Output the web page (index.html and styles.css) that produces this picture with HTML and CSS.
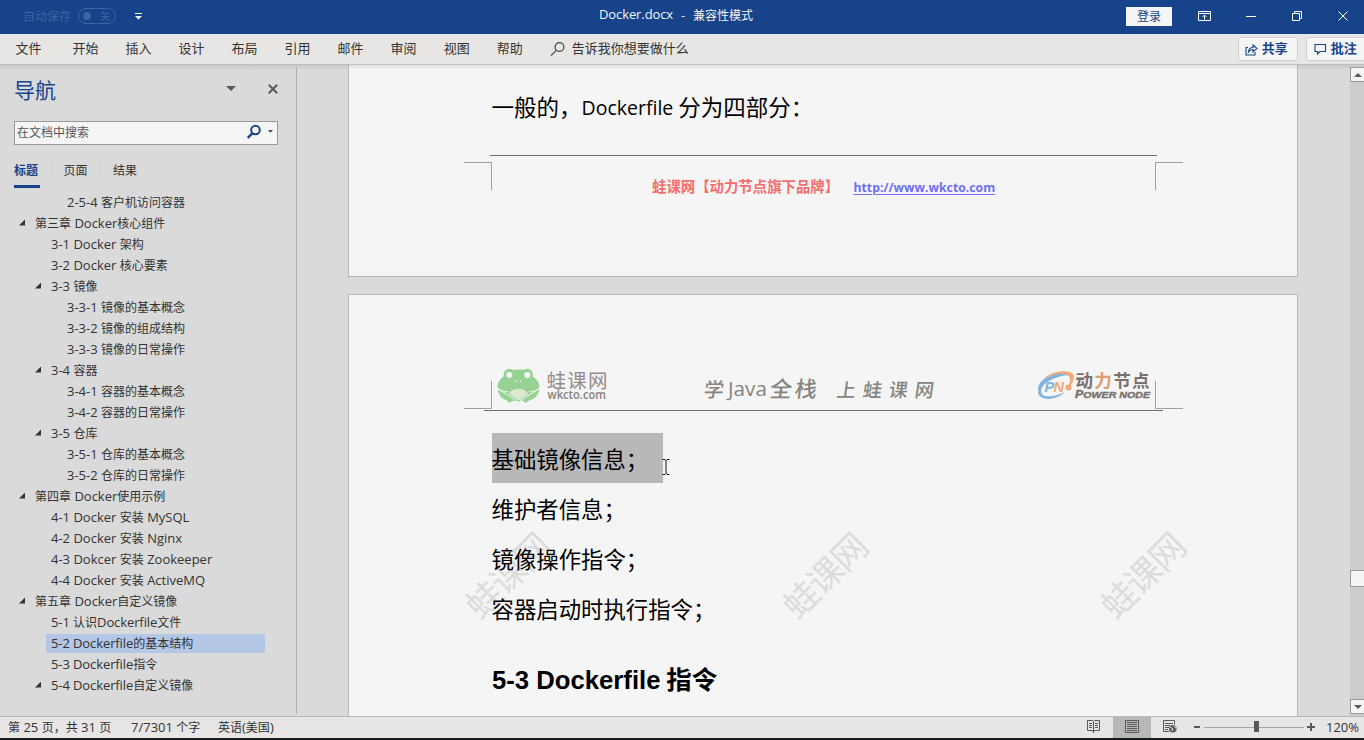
FILE: index.html
```html
<!DOCTYPE html>
<html lang="zh-CN">
<head>
<meta charset="utf-8">
<title>Docker.docx - 兼容性模式</title>
<link rel="stylesheet" href="styles.css">
</head>
<body>
<div class="app">
  <header class="titlebar">
    <span class="autosave">自动保存</span>
    <span class="toggle"><i class="knob"></i>关</span>
    <svg class="qat" width="7" height="8" viewBox="0 0 7 8"><path d="M0 .5h7" stroke="#fff" stroke-width="1"/><path d="M0 3h7L3.500 6.500z" fill="#fff"/></svg>
    <span class="doc-title"><span class="en">Docker.docx</span><span class="dash">-</span>兼容性模式</span>
    <span class="login">登录</span>
    <svg class="win-icons" width="160" height="20" viewBox="1196 6 160 20" fill="none" stroke="#fff">
      <path d="M1198.500 11.500h12v9h-12zM1198.500 13.500h12M1204.500 19.500v-4M1202.500 17l2-2 2 2"/>
      <path d="M1246 16.500h10"/>
      <path d="M1292.500 13.500h7v7h-7zM1294.500 13v-1.500h7v7h-1.500"/>
      <path d="M1338.500 11.500l9 9M1347.500 11.500l-9 9"/>
    </svg>
  </header>

  <nav class="ribbon">
    <span class="first">文件</span><span>开始</span><span>插入</span><span>设计</span><span>布局</span><span>引用</span><span>邮件</span><span>审阅</span><span>视图</span><span>帮助</span>
    <svg width="16" height="16" viewBox="0 0 16 16" fill="none" stroke="#444" stroke-width="1.200"><circle cx="9.500" cy="6" r="4.400"/><path d="M6.300 9.300L1 14.600"/></svg>
    <span class="tell">告诉我你想要做什么</span>
    <span class="btn share"><svg width="13" height="13" viewBox="0 0 13 13" fill="none" stroke="#17448a" stroke-width="1.100"><path d="M3 4.500H1v7.500h9V9M3.500 9c.2-3 2-4.500 4.500-4.500V2l4 3.500-4 3.300V6.500C6 6.500 4.600 7.300 3.500 9z"/></svg><em>共享</em></span>
    <span class="btn comment"><svg width="13" height="12" viewBox="0 0 13 12" fill="none" stroke="#17448a" stroke-width="1.100"><path d="M1 1.500h10.500v7H6L3.500 11V8.500H1z"/></svg><em>批注</em></span>
  </nav>

  <main class="work">
    <aside class="side">
      <div class="side-head">
        <h2>导航</h2>
        <svg width="10" height="5" viewBox="0 0 10 5"><path d="M0 0h10L5 5z" fill="#595959"/></svg>
        <svg class="close" width="10" height="10" viewBox="0 0 10 10"><path d="M.8.800l8.400 8.400M9.200.800L.8 9.200" stroke="#595959" stroke-width="2"/></svg>
      </div>
      <div class="search">
        <span>在文档中搜索</span>
        <svg width="30" height="16" viewBox="0 0 30 16"><circle cx="8.500" cy="6" r="4.300" fill="none" stroke="#17448a" stroke-width="2"/><path d="M5.500 9.200L.8 14" stroke="#17448a" stroke-width="2.400"/><path d="M21 6h5l-2.500 2.800z" fill="#444"/></svg>
      </div>
      <div class="tabs"><span class="on">标题</span><i></i><span>页面</span><i></i><span>结果</span></div>
      <ul class="tree">
        <li class="l3"><b>2-5-4 </b>客户机访问容器</li>
        <li class="l1 open">第三章<b> Docker</b>核心组件</li>
        <li class="l2"><b>3-1 Docker </b>架构</li>
        <li class="l2"><b>3-2 Docker </b>核心要素</li>
        <li class="l2 open"><b>3-3 </b>镜像</li>
        <li class="l3"><b>3-3-1 </b>镜像的基本概念</li>
        <li class="l3"><b>3-3-2 </b>镜像的组成结构</li>
        <li class="l3"><b>3-3-3 </b>镜像的日常操作</li>
        <li class="l2 open"><b>3-4 </b>容器</li>
        <li class="l3"><b>3-4-1 </b>容器的基本概念</li>
        <li class="l3"><b>3-4-2 </b>容器的日常操作</li>
        <li class="l2 open"><b>3-5 </b>仓库</li>
        <li class="l3"><b>3-5-1 </b>仓库的基本概念</li>
        <li class="l3"><b>3-5-2 </b>仓库的日常操作</li>
        <li class="l1 open">第四章<b> Docker</b>使用示例</li>
        <li class="l2"><b>4-1 Docker </b>安装<b> MySQL</b></li>
        <li class="l2"><b>4-2 Docker </b>安装<b> Nginx</b></li>
        <li class="l2"><b>4-3 Dokcer </b>安装<b> Zookeeper</b></li>
        <li class="l2"><b>4-4 Docker </b>安装<b> ActiveMQ</b></li>
        <li class="l1 open">第五章<b> Docker</b>自定义镜像</li>
        <li class="l2 tight"><b>5-1 </b>认识<b>Dockerfile</b>文件</li>
        <li class="l2 tight sel"><b>5-2 Dockerfile</b>的基本结构</li>
        <li class="l2 tight"><b>5-3 Dockerfile</b>指令</li>
        <li class="l2 tight open"><b>5-4 Dockerfile</b>自定义镜像</li>
      </ul>
    </aside>

    <section class="canvas">
      <article class="page page-a">
        <p class="body-line">一般的，<span class="latin">Dockerfile</span> 分为四部分：</p>
        <div class="foot-rule"></div>
        <footer class="foot">
          <i class="mark left"></i>
          <span class="foot-text"><span class="brand">蛙课网【动力节点旗下品牌】</span><a>http://www.wkcto.com</a></span>
          <i class="mark right"></i>
        </footer>
      </article>

      <article class="page page-b">
        <svg class="page-head" width="720" height="48" viewBox="464 364 720 48">
          <path d="M464 408.500h27.500V381M1183 408.500h-27.500V381" fill="none" stroke="#a0a0a0"/>
          <path d="M484 410.500h679" stroke="#6e6e6e"/>
          <g fill="#96d293">
            <circle cx="509.300" cy="374.500" r="5.700"/><circle cx="527.300" cy="374.500" r="5.700"/>
            <path d="M509 370.500Q518 368.500 527 370.500L532 376Q539.500 381 539.500 387Q538 391.500 518.500 392.500Q499 391.500 497.300 387Q497.500 381 504 376z"/>
            <path d="M497.500 389.500Q502 391 507 392.500Q511 389 518.500 388.700Q526 389 530 392.500Q535 391 539.500 389.500Q538 398 529 400.500L526 403L523 400.800L518.500 401.500L513 400.800L509 403L507 400.500Q499 398 497.500 389.500z"/>
          </g>
          <path d="M508.500 394Q512 388.800 518 388.700Q525 388.800 528.500 394L519 400.500z" fill="#dce8ce"/>
          <path d="M497.500 388.500L517 401M539.500 388.500L520 401" stroke="#f5f5f5" stroke-width="1"/>
          <g fill="#f5f5f5"><circle cx="509.300" cy="375" r="3"/><circle cx="527.300" cy="375" r="3"/><circle cx="516" cy="381.300" r=".8"/><circle cx="520.500" cy="381.300" r=".8"/></g>
          <text class="logo-cn" x="546.500" y="387.500" textLength="61">蛙课网</text>
          <text class="logo-en" x="547.500" y="399" textLength="58.500" lengthAdjust="spacingAndGlyphs">wkcto.com</text>
          <g class="slogan">
            <text class="brush" transform="translate(703 396.500) skewX(-8)" font-size="20">学</text>
            <text class="java" x="728" y="396" textLength="39" lengthAdjust="spacingAndGlyphs">Java</text>
            <text class="brush" transform="translate(769 396.500) skewX(-8)" font-size="22" textLength="47">全栈</text>
            <text class="brush" transform="translate(836 396.500) skewX(-8)" font-size="19" textLength="97">上蛙课网</text>
          </g>
          <path d="M1044 396C1034 392 1037 381 1050 376C1060 371 1072 371 1073 377C1070 374 1062 375 1053 379C1041 384 1038 392 1044 396z" fill="#80b4e0"/>
          <path d="M1043 379C1052 371 1068 369 1073 374C1076 379 1071 387 1065 390C1071 383 1072 377 1067 375C1060 372 1051 375 1043 379z" fill="#f3a878"/>
          <path d="M1039 390C1040 398 1053 398 1065 392C1055 401.500 1040 400.500 1038 393z" fill="#80b4e0"/>
          <circle cx="1068.500" cy="387.500" r="3" fill="#f3a878"/>
          <text class="pn" x="1044.500" y="391.500" fill="#80b4e0">P</text><text class="pn" x="1053.500" y="391.500" fill="#f3a878">N</text>
          <text class="pw-cn" x="1075.500" y="387" textLength="74">动<tspan fill="#e09c72">力</tspan>节点</text>
          <text class="pw-en" x="1075" y="398" textLength="75" lengthAdjust="spacingAndGlyphs"><tspan font-size="10.500">P</tspan><tspan>OWER NODE</tspan></text>
        </svg>
        <svg class="watermark" width="760" height="110" viewBox="450 521 760 110">
          <text transform="translate(481 621) rotate(-45)" textLength="103">蛙课网</text>
          <text transform="translate(798 621) rotate(-45)" textLength="103">蛙课网</text>
          <text transform="translate(1116 621) rotate(-45)" textLength="103">蛙课网</text>
        </svg>
        <div class="lines">
          <p class="picked"><span>基础镜像信息；</span></p>
          <p>维护者信息；</p>
          <p>镜像操作指令；</p>
          <p>容器启动时执行指令；</p>
        </div>
        <h1><span>5-3 Dockerfile</span> 指令</h1>
        <svg class="caret" width="8" height="16" viewBox="0 0 8 16" fill="none" stroke="#111"><path d="M.5.500h2.500l1 1 1-1h2.500M4 1.500v13M.5 15.500h2.500l1-1 1 1h2.500"/></svg>
      </article>
    </section>

    <div class="scroll">
      <i class="arrow"><svg width="8" height="4" viewBox="0 0 8 4"><path d="M0 4h8L4 0z" fill="#595959"/></svg></i>
      <i class="thumb"></i>
      <i class="arrow down"><svg width="8" height="4" viewBox="0 0 8 4"><path d="M0 0h8L4 4z" fill="#595959"/></svg></i>
    </div>
  </main>

  <footer class="status">
    <span class="s1">第<b> 25 </b>页，共<b> 31 </b>页</span>
    <span class="s2"><b>7/7301 </b>个字</span>
    <span class="s3">英语<b>(</b>美国<b>)</b></span>
    <svg class="views" width="250" height="21" viewBox="1076 717 250 21" fill="none" stroke="#595959">
      <rect x="1113" y="717" width="38" height="22" fill="#b8b8b8" stroke="none"/>
      <path d="M1087.500 720.500h5l1 1 1-1h5v10h-5l-1 1.500-1-1.500h-5zM1093.500 721v12M1089 723.500h3M1095 723.500h3M1089 725.500h3M1095 725.500h3M1089 727.500h3M1095 727.500h3"/>
      <path d="M1125.500 720.500h13v12h-13zM1127 722.500h10M1127 724.500h10M1127 726.500h10M1127 728.500h10M1127 730.500h10"/>
      <path d="M1169 731.500h-5.500v-11h11v4M1165 723.500h8M1165 725.500h5M1165 727.500h4M1165 729.500h3"/>
      <circle cx="1172.800" cy="728.700" r="3.800" fill="#595959" stroke="none"/><path d="M1170 727l3 2-1 2M1174 725.500l2 3" stroke="#e7e6e4"/>
      <path d="M1194 727h6M1307 727h8M1311 723v8" stroke-width="2"/>
      <path d="M1204 727.500h100" stroke="#a6a6a6"/>
      <rect x="1254" y="721" width="5" height="11" fill="#595959" stroke="none"/>
    </svg>
    <span class="zoom"><b>120%</b></span>
  </footer>
  <div class="taskbar"></div>
</div>
</body>
</html>
```
FILE: styles.css
```css
* { box-sizing: border-box; }
body { margin: 0; font: 12px/1 "Noto Sans CJK SC", sans-serif; color: #333; background: #dadada; overflow: hidden; }
p, h1, h2, ul { margin: 0; padding: 0; }
em { font-style: normal; }
svg { display: block; flex: none; }
.app { width: 1364px; height: 740px; display: flex; flex-direction: column; white-space: nowrap; }
.en, .tree b, .status b { font-family: "Open Sans", "Noto Sans", sans-serif; font-size: 13px; font-weight: 400; white-space: pre; }

.titlebar { height: 34px; flex: none; background: #164389; display: flex; align-items: center; padding: 0 8px 3px 23px; color: #f2f5fa; }
.autosave { color: #3d649f; width: 55px; }
.toggle { width: 38px; height: 16px; border: 1px solid #3d649f; border-radius: 8px; display: flex; align-items: center; justify-content: space-between; padding: 0 5px 0 4px; color: #3d649f; font-size: 10px; }
.knob { width: 8px; height: 8px; border-radius: 4px; background: #3d649f; }
.qat { margin-left: 19px; margin-top: 3px; }
.doc-title { margin-left: 457px; width: 527px; display: flex; align-items: center; padding-bottom: 2px; }
.doc-title .en { letter-spacing: -0.100px; }
.dash { width: 20px; text-align: center; }
.login { width: 46px; height: 19px; background: #f5f5f5; color: #164389; line-height: 18px; text-align: center; margin-top: 2px; }
.win-icons { margin-left: 24px; margin-top: 1px; }

.ribbon { height: 31px; flex: none; background: #e7e6e4; border-bottom: 1px solid #bfbfbf; display: flex; align-items: center; padding: 0 0 4px 15.500px; font-size: 13px; color: #333; gap: 27px; }
.ribbon .first { margin-right: 4px; }
.ribbon > svg { margin-top: 4px; }
.ribbon .tell { margin-left: -21px; width: 639px; flex: none; }
.btn { height: 24px; background: #f5f5f5; border: 1px solid #d0d0d0; border-radius: 2px; color: #17448a; font-weight: 700; display: flex; align-items: center; gap: 4px; padding-left: 6px; margin-top: 4px; flex: none; }
.btn em { padding-bottom: 3px; }
.share { width: 60px; }
.comment { width: 70px; margin-left: -19px; padding-left: 7px; }

.work { flex: 1; min-height: 0; display: flex; background: linear-gradient(#c9c9c9, #dadada 5px); }
.side { width: 297px; flex: none; padding-left: 14px; border-right: 1px solid #b0b0b0; margin: 2px 0; }
.side-head { height: 54px; display: flex; align-items: center; padding-bottom: 11px; }
.side-head h2 { font-size: 21px; font-weight: 400; color: #17448a; width: 212px; padding-top: 2px; }
.side-head .close { margin-left: 32px; }
.search { width: 264px; height: 24px; background: #f5f5f5; border: 1px solid #999; display: flex; align-items: center; justify-content: space-between; padding: 0 0 2px 2px; color: #555; }
.tabs { display: flex; height: 46px; padding-top: 14px; }
.tabs span { width: 26px; height: 29px; line-height: 22px; }
.tabs i { width: 1px; height: 19px; background: #d3d3d3; margin: 0 12px 0 10.500px; }
.tabs .on { color: #17448a; font-weight: 700; border-bottom: 3px solid #17448a; }
.tree { list-style: none; }
.tree li { height: 21px; line-height: 20px; display: flex; align-items: center; }
.tree li::before { content: ""; width: 6px; height: 6px; margin-right: 10px; flex: none; }
.tree li.open::before { background: #333; clip-path: polygon(100% 0, 100% 100%, 0 100%); }
.tree .tight b { letter-spacing: -0.100px; }
.l1 { padding-left: 5px; }
.l2 { padding-left: 21px; }
.l3 { padding-left: 37px; }
.tree .sel { background: linear-gradient(#b4c7e7, #b4c7e7) 32px 2px / 219px 20px no-repeat; }

.canvas { width: 1053px; flex: none; padding-left: 51px; overflow: hidden; }
.page { width: 950px; background: #f5f5f5; border: 1px solid #b6b6b6; position: relative; }
.page-a { height: 212px; border-top: 0; margin-bottom: 17px; background: linear-gradient(#e0e0e0, #f5f5f5 5px); }
.page-b { height: 440px; padding-top: 69px; }
.body-line { height: 90px; padding: 30px 0 0 142.500px; font-size: 22.500px; line-height: 22px; color: #000; }
.latin { font: 19.500px/20px "Open Sans", sans-serif; position: relative; top: -1px; }
.foot-rule { width: 667px; height: 1px; background: #6e6e6e; margin-left: 141px; }
.foot { display: flex; margin: 6px 0 0 115px; width: 719px; }
.mark { width: 28px; height: 28px; flex: none; border-top: 1px solid #a0a0a0; }
.mark.left { border-right: 1px solid #a0a0a0; }
.mark.right { border-left: 1px solid #a0a0a0; }
.foot-text { width: 663px; padding: 14px 0 0 160px; display: flex; font-size: 14.400px; font-weight: 700; }
.brand { color: #f66e6e; width: 201.500px; line-height: 20px; }
.foot-text a { font: 700 12.250px/23px "Open Sans", sans-serif; color: #6f6ff2; text-decoration: underline; text-underline-offset: 2px; }
.page-head { margin-left: 115px; }
.logo-cn { font-size: 19.500px; fill: #958b88; }
.logo-en { font: 600 12px "Open Sans", sans-serif; fill: #87807d; }
.slogan { fill: #85857f; }
.brush { font-family: "Noto Sans CJK SC", sans-serif; font-weight: 500; }
.java { font: 20px "Open Sans", sans-serif; }
.pn { font: italic 700 14.500px "Liberation Sans", sans-serif; }
.pw-cn { font-size: 17.500px; font-weight: 700; fill: #7b716e; }
.pw-en { font: italic 700 9px "Liberation Sans", sans-serif; fill: #7b716e; stroke: #7b716e; stroke-width: .4px; }
.watermark { position: absolute; left: 101px; top: 226px; font-size: 35px; fill: #dcdcdc; overflow: visible; }
.lines { position: relative; padding: 21px 0 0 143px; font-size: 22.400px; color: #000; }
.lines p { height: 50px; line-height: 50px; text-indent: -0.500px; }
.lines .picked { width: 171px; background: #b8b8b8; }
h1 { padding: 32px 0 0 143px; font-size: 25.500px; line-height: 26px; color: #000; font-weight: 700; }
h1 span { font: 700 25.700px/26px "Liberation Sans", sans-serif; }
.caret { position: absolute; left: 313px; top: 164px; }

.scroll { width: 14px; margin-top: 2px; background: #cdcdcd; display: flex; flex-direction: column; }
.arrow { height: 15px; background: #f5f5f5; border: 1px solid #999; border-right: 0; display: flex; align-items: center; justify-content: center; }
.thumb { height: 17px; background: #f5f5f5; border: 1px solid #999; border-right: 0; margin-top: 488px; }
.down { margin-top: auto; margin-bottom: 2px; }

.status { height: 22px; flex: none; background: #e7e6e4; border-top: 1px solid #b8b8b8; display: flex; align-items: center; padding-left: 8px; color: #333; }
.s1 { width: 123px; }
.s2 { width: 87px; }
.s3 { width: 858px; }
.status span { display: flex; align-items: center; line-height: 20px; padding-bottom: 2px; }
.taskbar { height: 2px; flex: none; background: #16191d; }
```
